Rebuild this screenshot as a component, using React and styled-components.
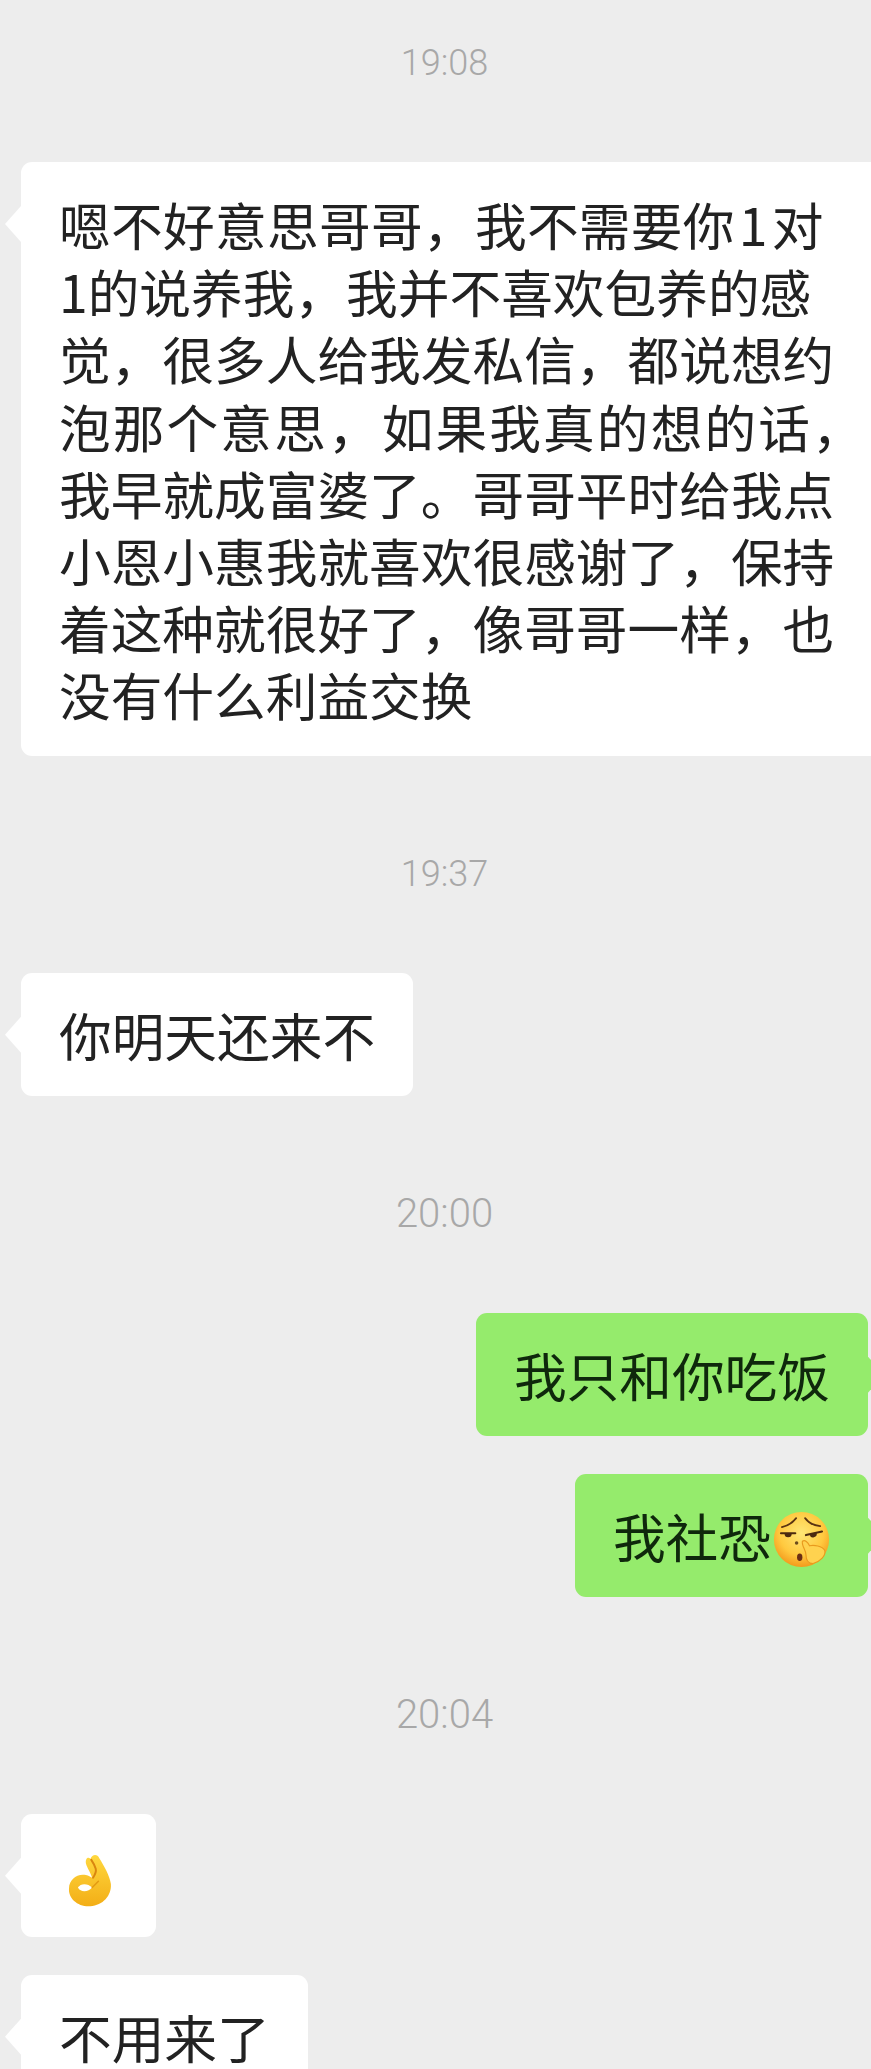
import React from "react"
import styled, { createGlobalStyle } from "styled-components"

const GlobalStyle = createGlobalStyle`
    html, body {
        margin: 0;
        padding: 0;
        background: #ededed;
    }
`

const Page = styled.div`
    display: flex;
    flex-direction: column;
    box-sizing: border-box;
    width: 871px;
    height: 2069px;
    padding: 43px 0 0 21px;
    overflow: hidden;
    background: #ededed;
    font-family: "Noto Sans CJK SC", "Noto Sans", sans-serif;
`

const Time = styled.div`
    margin: ${props => props.$first ? 0 : 98}px 0 79px;
    padding-right: 3px;
    height: 40px;
    line-height: 40px;
    text-align: center;
    font-family: Roboto, sans-serif;
    font-size: ${props => props.$wide ? 40 : 36}px;
    font-weight: 300;
    color: #a8a8a8;
`

const Row = styled.div`
    display: flex;
    justify-content: ${props => props.$mine ? 'flex-end' : 'flex-start'};
    padding-right: 3px;
    & + & {
        margin-top: 38px;
    }
`

const Bubble = styled.div`
    position: relative;
    flex: ${props => props.$long ? 1 : 'none'};
    margin-right: ${props => props.$long ? -2 : 0}px;
    padding: 28px 38px;
    border-radius: 11px;
    background: ${props => props.$mine ? '#95eb6c' : '#ffffff'};
    color: ${props => props.$mine ? '#0f280c' : '#222222'};
    font-size: ${props => props.$long ? 51.7 : 52.7}px;
    line-height: ${props => props.$long ? 67.2 : 67}px;
    white-space: nowrap;
    &::before {
        content: "";
        position: absolute;
        top: 44px;
        width: 16px;
        height: 36px;
        background: inherit;
        ${props => props.$mine ? 'right: -16px;' : 'left: -16px;'}
        clip-path: ${props => props.$mine ? 'polygon(0 0, 100% 50%, 0 100%)' : 'polygon(100% 0, 0 50%, 100% 100%)'};
    }
`

// the lines of the long message do not all have the same pitch
const Line = styled.span`
    display: block;
    letter-spacing: ${props => props.$track || 0}px;
`

const Digit = styled.span`
    margin: 0 4px;
`

const Emoji = styled.svg`
    display: inline-block;
    width: 57px;
    height: 57px;
    margin-left: 2px;
    vertical-align: -10px;
`

const ShushFace = () => (
    <Emoji viewBox="0 0 64 64">
        <defs>
            <radialGradient id="faceFill" cx="50%" cy="38%" r="62%">
                <stop offset="0" stopColor="#ffe675" />
                <stop offset="0.65" stopColor="#ffc93f" />
                <stop offset="1" stopColor="#f39a1c" />
            </radialGradient>
        </defs>
        <circle cx="32" cy="32" r="31" fill="url(#faceFill)" />
        <path d="M10 18 Q20 16 26 8" fill="none" stroke="#5a3312" strokeWidth="2" strokeLinecap="round" />
        <path d="M36 8 Q42 16 53 17" fill="none" stroke="#5a3312" strokeWidth="2" strokeLinecap="round" />
        <path d="M9 25 H25" stroke="#4b2a10" strokeWidth="2.4" strokeLinecap="round" />
        <path d="M37 27 L55 23" stroke="#4b2a10" strokeWidth="2.4" strokeLinecap="round" />
        <path d="M13 25.5 A4 4 0 0 0 21 25.5 Z" fill="#4b2a10" />
        <path d="M41 26.5 A4 4 0 0 0 49 24.5 Z" fill="#4b2a10" />
        <circle cx="26.5" cy="36" r="2" fill="#6b4a1c" />
        <ellipse cx="30" cy="52" rx="3" ry="4.2" fill="#6b2f14" />
        <path d="M33 34 C36 32 39 35 41 39 C46 38 55 39 58 44 C60 50 53 57 45 59 C40 59 37 55 37 49 C37 44 32 39 33 34 Z" fill="#ffd24f" stroke="#e99a1e" strokeWidth="1.3" />
    </Emoji>
)

const OkHand = () => (
    <Emoji viewBox="0 0 64 64">
        <defs>
            <linearGradient id="handFill" x1="0" y1="0" x2="0" y2="1">
                <stop offset="0" stopColor="#ffd83f" />
                <stop offset="1" stopColor="#f3ae16" />
            </linearGradient>
        </defs>
        <path d="M33 9 C35 3 41 3 43 8 C48 16 55 28 56 37 C57 50 47 61 33 62 C19 63 8 53 9 42 C9 32 18 25 28 27 C31 27.5 33 29 35 30 C33 24 29 18 28 14 C27 8 31 6 33 9 Z" fill="url(#handFill)" />
        <path d="M19 41 C22 36 30 36 35 41 C31 46 22 47 19 41 Z" fill="#ffffff" />
        <path d="M36 30 C38 27 40 24 39 20 C38 16 36 13 34 10" fill="none" stroke="#d9860f" strokeWidth="2.2" strokeLinecap="round" />
        <path d="M35 41 C38 38 40 36 42 34" fill="none" stroke="#e39a12" strokeWidth="1.6" strokeLinecap="round" />
    </Emoji>
)

const App = () => (
    <Page>
        <GlobalStyle />
        <Time $first>19:08</Time>
        <Row>
            <Bubble $long>
                <Line $track={0.3}>嗯不好意思哥哥，我不需要你<Digit>1</Digit>对</Line>
                <Line>1的说养我，我并不喜欢包养的感</Line>
                <Line>觉，很多人给我发私信，都说想约</Line>
                <Line $track={2.1}>泡那个意思，如果我真的想的话，</Line>
                <Line>我早就成富婆了。哥哥平时给我点</Line>
                <Line>小恩小惠我就喜欢很感谢了，保持</Line>
                <Line>着这种就很好了，像哥哥一样，也</Line>
                <Line>没有什么利益交换</Line>
            </Bubble>
        </Row>
        <Time>19:37</Time>
        <Row>
            <Bubble>你明天还来不</Bubble>
        </Row>
        <Time $wide>20:00</Time>
        <Row $mine>
            <Bubble $mine>我只和你吃饭</Bubble>
        </Row>
        <Row $mine>
            <Bubble $mine>我社恐<ShushFace /></Bubble>
        </Row>
        <Time $wide>20:04</Time>
        <Row>
            <Bubble><OkHand /></Bubble>
        </Row>
        <Row>
            <Bubble>不用来了</Bubble>
        </Row>
    </Page>
)

export default App
